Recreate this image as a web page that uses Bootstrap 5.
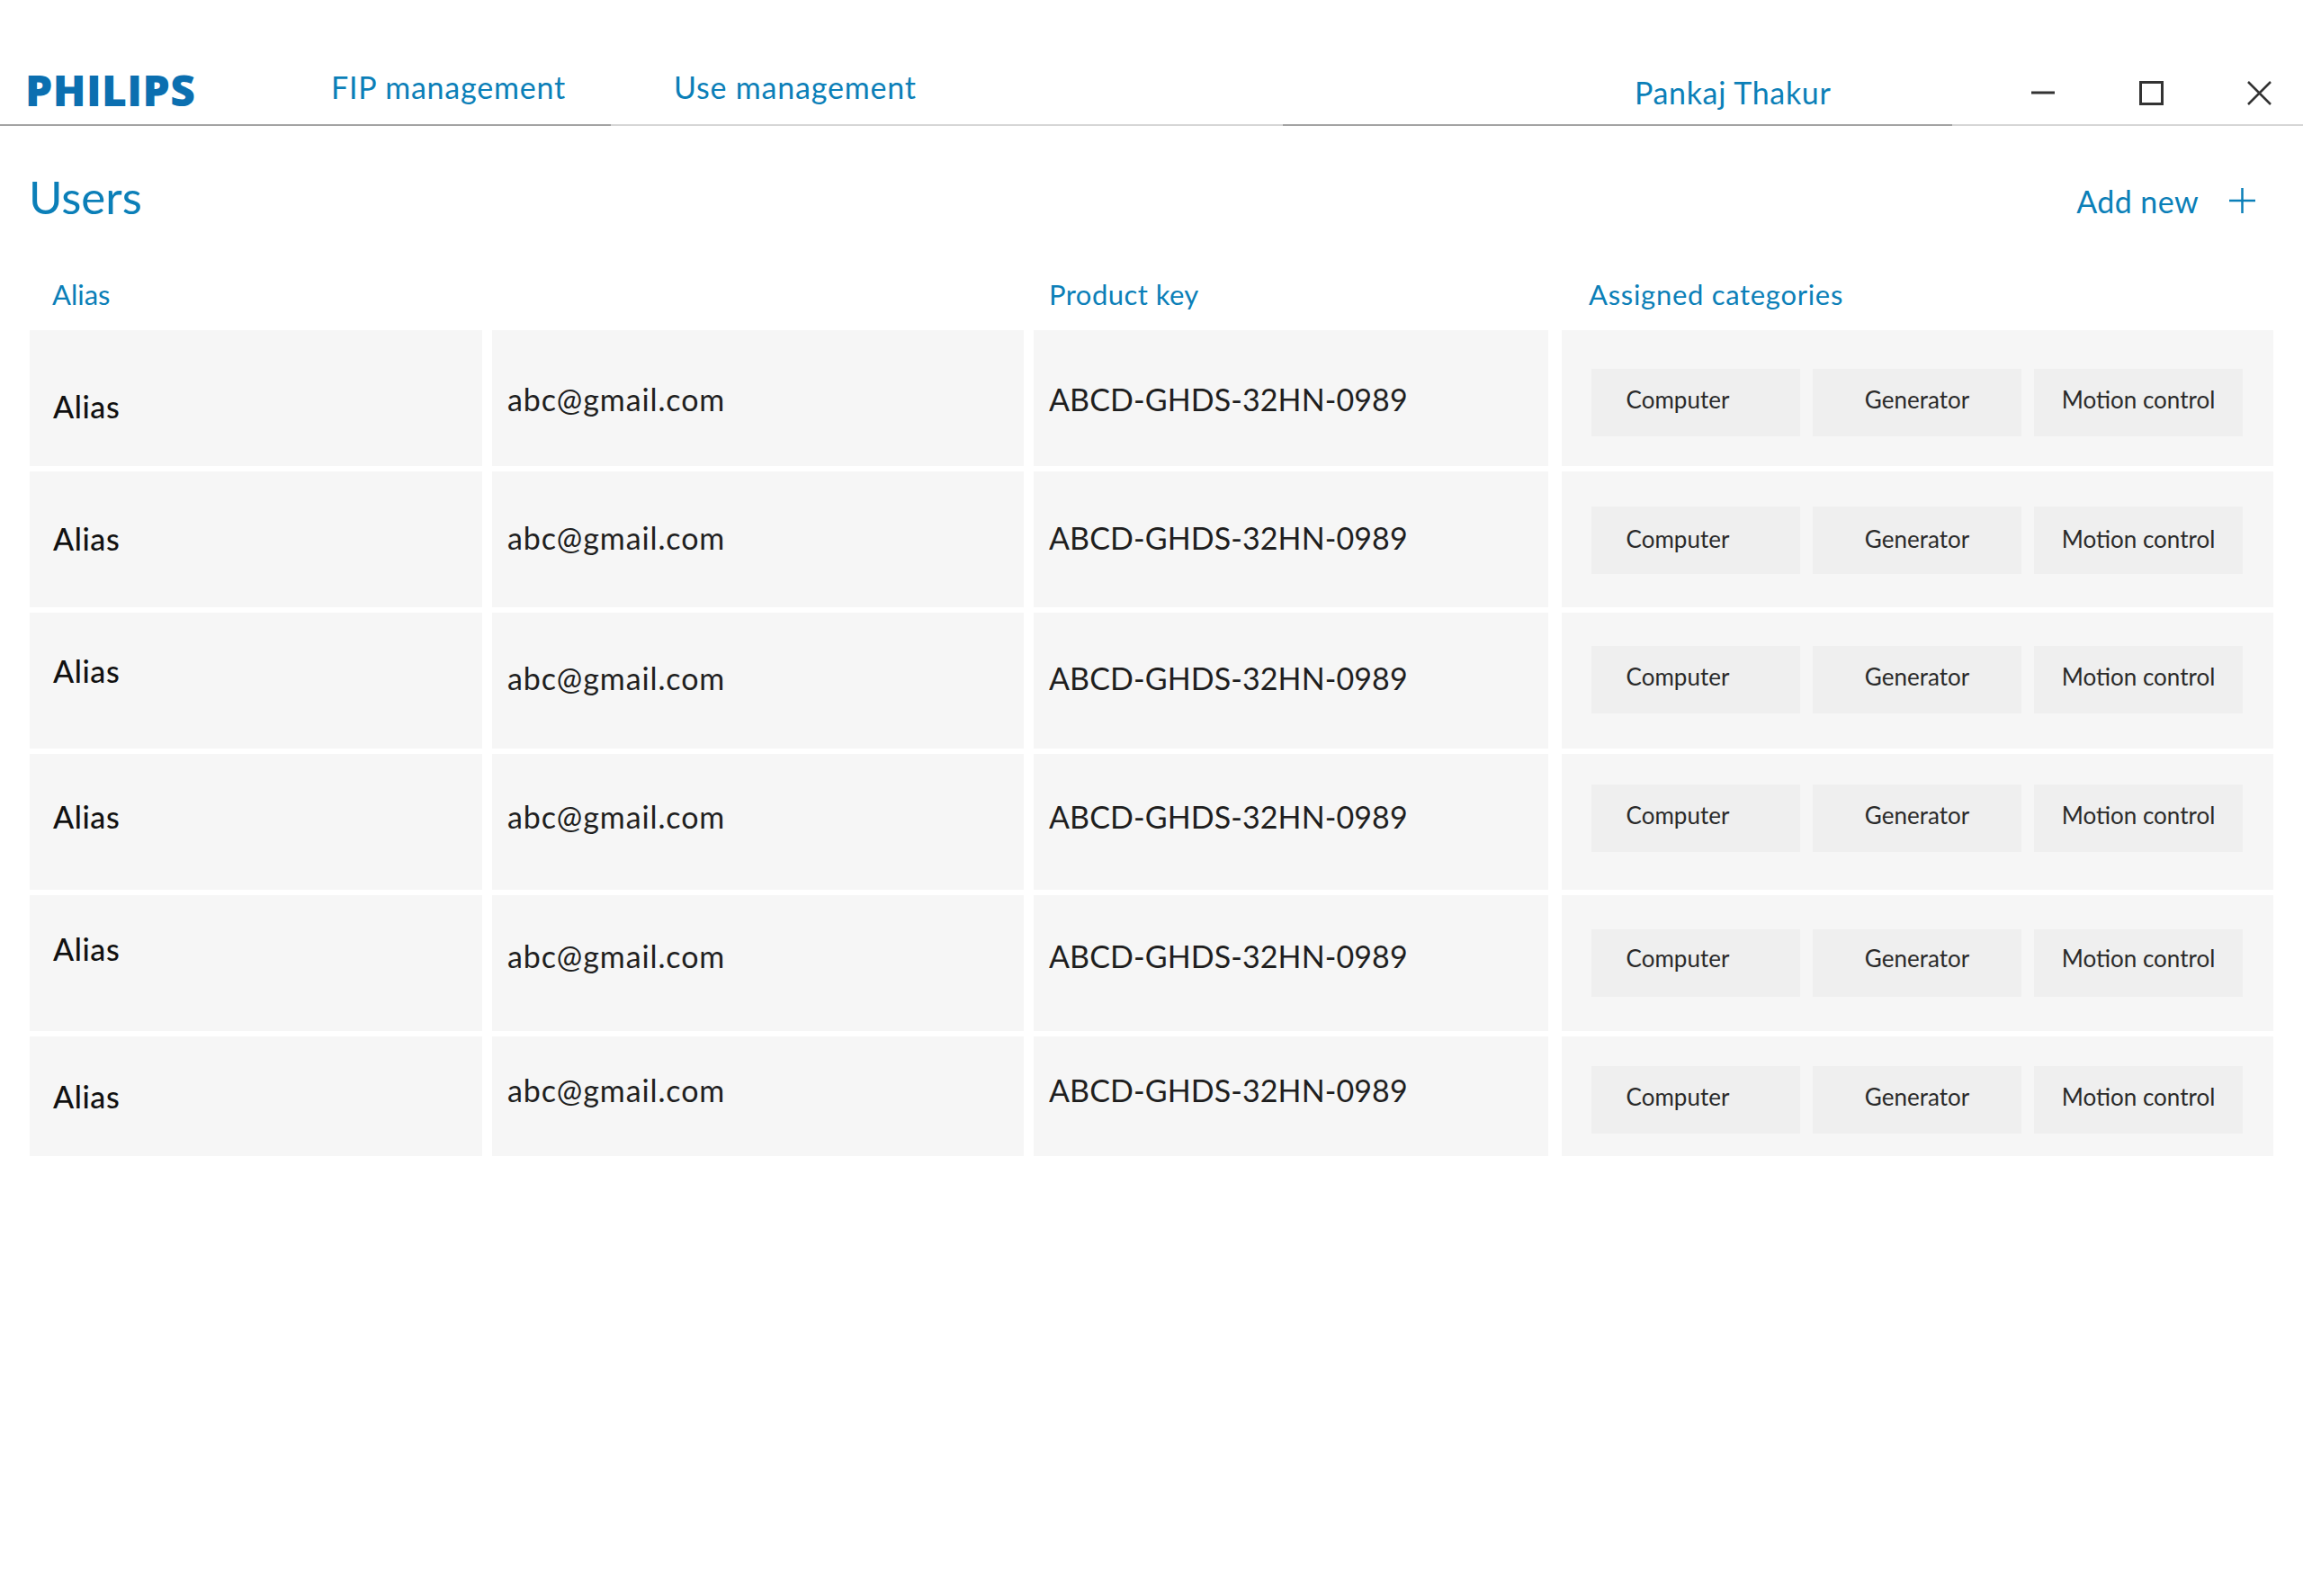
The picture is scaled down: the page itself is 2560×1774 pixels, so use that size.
<!DOCTYPE html>
<html lang="en"><head><meta charset="utf-8"><title>Users</title>
<link href="https://cdn.jsdelivr.net/npm/bootstrap@5.3.0/dist/css/bootstrap.min.css" rel="stylesheet">
<style>
html,body{background:#fff;font-family:"Lato","Noto Sans",sans-serif;color:#1f1f1f;}
.app-page{width:2560px;height:1774px;overflow:hidden;position:relative}
.title-bar{height:140px;position:relative}
.rule-a,.rule-b{position:absolute;left:0;right:0;height:2px;top:138px}
.rule-b{background:#d6d6d6}
.rule-a{background:linear-gradient(90deg,#a3a3a3 0 679px,transparent 679px 1426px,#a3a3a3 1426px 2170px,transparent 2170px)}
.brand-word{position:absolute;left:28px;top:76px;font:800 48px/1 "Open Sans",sans-serif;color:#0b6fb0;letter-spacing:.4px}
.top-link{position:absolute;top:73px;font-size:34px;line-height:48px;color:#0b7fb8;text-decoration:none;white-space:nowrap;letter-spacing:.8px}
.link-fip{left:368px}
.link-use{left:749px}
.link-user{left:1817px;top:79px;letter-spacing:.65px}
.win-ic{position:absolute;display:block}
.ic-min{left:2258px;top:98px}
.ic-max{left:2378px;top:90px}
.ic-close{left:2498px;top:90px}
.head-line{display:flex;justify-content:space-between;align-items:center;padding:0 53px 0 32px;height:160px}
.page-title{font-size:51px;line-height:1;margin:0 0 3px;color:#0b7fb8;font-weight:400}
.add-link{font-size:34px;color:#0b7fb8;text-decoration:none;padding-top:6px;letter-spacing:.4px;gap:34px}
.col-heads{display:grid;grid-template-columns:503px 591px 572px 806px;column-gap:11px;margin-left:33px;height:67px;align-items:center;font-size:31px;color:#0b7fb8;padding-bottom:12px}
.col-heads>div{padding-left:25px}
.col-heads>div:nth-child(2){padding-left:0}
.col-heads>div:nth-child(3){padding-left:17px;letter-spacing:.45px}
.col-heads>div:nth-child(4){padding-left:34px;letter-spacing:.7px}
.user-grid{display:grid;grid-template-columns:503px 591px 572px 791px;column-gap:11px;margin-left:33px;row-gap:6px;grid-auto-rows:151px}
.user-grid .u-cell{background:#f6f6f6;display:flex;align-items:flex-start;font-size:34px;line-height:44px;padding-left:17px;white-space:nowrap}
.user-grid .u-alias{padding-left:26px;font-weight:500;color:#111;padding-top:var(--al);letter-spacing:.6px}
.user-grid .u-mail{padding-top:var(--ml);letter-spacing:.9px}
.user-grid .u-key{padding-top:var(--ml);letter-spacing:.1px}
.user-grid .u-cats{margin-left:4px;width:791px;padding-left:33px;padding-top:var(--ch);gap:14px}
.cat-chip{width:232px;height:75px;background:#efefef;font-size:26px;line-height:36px;color:#2a2a2a;text-align:center;padding-top:var(--ct)}
.cat-chip:first-child{padding-right:40px}
.rw1{--al:63px;--ml:55px;--ch:43px;--ct:16px}
.rw2{--al:53px;--ml:52px;--ch:39px;--ct:18px}
.rw3{--al:43px;--ml:51px;--ch:37px;--ct:16px}
.rw4{--al:48px;--ml:48px;--ch:34px;--ct:16px}
.rw5{--al:38px;--ml:46px;--ch:38px;--ct:14px}
.rw6{--al:45px;--ml:38px;--ch:33px;--ct:16px}
.user-grid .last-row{height:133px}
</style></head>
<body>
<div class="app-page">
  <div class="title-bar">
    <div class="brand-word">PHILIPS</div>
    <a class="top-link link-fip" href="#">FIP management</a>
    <a class="top-link link-use" href="#">Use management</a>
    <a class="top-link link-user" href="#">Pankaj Thakur</a>
    <svg class="win-ic ic-min" width="26" height="10"><path d="M0 5H26" stroke="#333" stroke-width="3"/></svg>
    <svg class="win-ic ic-max" width="27" height="27" fill="none"><rect x="1.5" y="1.5" width="24" height="24" stroke="#333" stroke-width="3"/></svg>
    <svg class="win-ic ic-close" width="27" height="27" fill="none"><path d="M1 1L26 26M26 1L1 26" stroke="#333" stroke-width="2.5"/></svg>
    <div class="rule-b"></div><div class="rule-a"></div>
  </div>
  <div class="head-line">
    <h1 class="page-title">Users</h1>
    <a class="add-link d-flex align-items-center" href="#">Add new
      <svg width="29" height="28" fill="none"><path d="M14.5 0V28M0 14H29" stroke="#0b7fb8" stroke-width="2.5"/></svg></a>
  </div>
  <div class="col-heads"><div>Alias</div><div></div><div>Product key</div><div>Assigned categories</div></div>
  <div class="user-grid">
    <div class="u-cell u-alias rw1">Alias</div><div class="u-cell u-mail rw1">abc@gmail.com</div><div class="u-cell u-key rw1">ABCD-GHDS-32HN-0989</div>
    <div class="u-cell u-cats rw1"><div class="cat-chip">Computer</div><div class="cat-chip">Generator</div><div class="cat-chip">Motion control</div></div>
    <div class="u-cell u-alias rw2">Alias</div><div class="u-cell u-mail rw2">abc@gmail.com</div><div class="u-cell u-key rw2">ABCD-GHDS-32HN-0989</div>
    <div class="u-cell u-cats rw2"><div class="cat-chip">Computer</div><div class="cat-chip">Generator</div><div class="cat-chip">Motion control</div></div>
    <div class="u-cell u-alias rw3">Alias</div><div class="u-cell u-mail rw3">abc@gmail.com</div><div class="u-cell u-key rw3">ABCD-GHDS-32HN-0989</div>
    <div class="u-cell u-cats rw3"><div class="cat-chip">Computer</div><div class="cat-chip">Generator</div><div class="cat-chip">Motion control</div></div>
    <div class="u-cell u-alias rw4">Alias</div><div class="u-cell u-mail rw4">abc@gmail.com</div><div class="u-cell u-key rw4">ABCD-GHDS-32HN-0989</div>
    <div class="u-cell u-cats rw4"><div class="cat-chip">Computer</div><div class="cat-chip">Generator</div><div class="cat-chip">Motion control</div></div>
    <div class="u-cell u-alias rw5">Alias</div><div class="u-cell u-mail rw5">abc@gmail.com</div><div class="u-cell u-key rw5">ABCD-GHDS-32HN-0989</div>
    <div class="u-cell u-cats rw5"><div class="cat-chip">Computer</div><div class="cat-chip">Generator</div><div class="cat-chip">Motion control</div></div>
    <div class="u-cell u-alias rw6 last-row">Alias</div><div class="u-cell u-mail rw6 last-row">abc@gmail.com</div><div class="u-cell u-key rw6 last-row">ABCD-GHDS-32HN-0989</div>
    <div class="u-cell u-cats rw6 last-row"><div class="cat-chip">Computer</div><div class="cat-chip">Generator</div><div class="cat-chip">Motion control</div></div>
  </div>
</div>
<script src="https://cdn.jsdelivr.net/npm/bootstrap@5.3.0/dist/js/bootstrap.bundle.min.js"></script>
</body></html>
